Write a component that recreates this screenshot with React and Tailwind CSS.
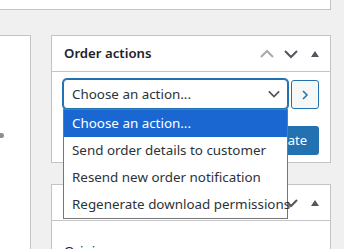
import React from 'react';

function Chevron({ dir = 'down', className = '' }) {
  const d = dir === 'up' ? 'M1 8 L7 2 L13 8' : 'M1 2 L7 8 L13 2';
  return (
    <svg width="14" height="10" viewBox="0 0 14 10" className={className}>
      <path d={d} fill="none" stroke="currentColor" strokeWidth="2" />
    </svg>
  );
}

function Triangle() {
  return (
    <svg width="8" height="6" viewBox="0 0 8 6" className="text-[#50575e]">
      <path d="M0 6 L4 0 L8 6 Z" fill="currentColor" />
    </svg>
  );
}

function PanelHeader({ title }) {
  return (
    <div className="flex items-center h-[36px] border-b border-[#c3c4c7] pl-[12px] pr-[8px]">
      <h2 className="flex-1 text-[13.2px] font-semibold text-[#1d2327]">{title}</h2>
      <div className="flex items-center gap-[10px] text-[#787c82]">
        <Chevron dir="up" className="text-[#a7aaad]" />
        <Chevron dir="down" className="text-[#50575e]" />
        <span className="w-[14px] flex justify-center">
          <Triangle />
        </span>
      </div>
    </div>
  );
}

const options = [
  'Choose an action...',
  'Send order details to customer',
  'Resend new order notification',
  'Regenerate download permissions',
];

export default function App() {
  return (
    <div
      className="w-[344px] h-[249px] overflow-hidden bg-[#f0f0f1] text-[13.4px] text-[#2c3338]"
      style={{ fontFamily: '"Noto Sans", "Open Sans", sans-serif' }}
    >
      <div className="w-[331px] h-[10px] bg-white border-b border-r border-[#c3c4c7]" />

      <div className="flex mt-[25px] gap-[20px]">
        <div className="relative w-[31px] h-[300px] bg-white border-r border-t border-[#c3c4c7]">
          <span className="absolute left-0 top-[97px] w-[4px] h-[5px] rounded-r-full bg-[#8c8f94]" />
        </div>

        <div className="w-[280px] flex flex-col gap-[21px]">
          <div className="relative bg-white border border-[#c3c4c7]">
            <PanelHeader title="Order actions" />
            <div className="pl-[11px] pr-[11px] pt-[7px] pb-[7px]">
              <div className="flex items-start gap-[3px]">
                <div className="w-[225px] h-[30px] flex items-center justify-between pl-[8px] pr-[7px] border border-[#2271b1] rounded-[4px] shadow-[0_0_0_1px_#2271b1] bg-white text-[#2c3338]">
                  <span>Choose an action...</span>
                  <Chevron dir="down" className="text-[#50575e] w-[12px]" />
                </div>
                <button className="mt-[1px] w-[28px] h-[29px] flex items-center justify-center border border-[#2271b1] rounded-[3px] bg-[#f6f7f7] text-[#2271b1]">
                  <svg width="8" height="10" viewBox="0 0 8 10">
                    <path d="M2 1 L6 5 L2 9" fill="none" stroke="currentColor" strokeWidth="1.5" />
                  </svg>
                </button>
              </div>
              <div className="flex justify-end mt-[17px]">
                <button className="h-[29px] px-[12px] rounded-[3px] bg-[#2271b1] text-white text-[13px]">
                  Update
                </button>
              </div>
            </div>

            <ul className="absolute z-10 left-[11px] top-[73px] w-[225px] bg-white border border-[#767676]">
              {options.map((o, i) => (
                <li
                  key={o}
                  className={
                    'h-[27px] flex items-center pl-[8px] whitespace-nowrap ' +
                    (i === 0 ? 'bg-[#1a67d2] text-white' : 'text-[#2c3338]')
                  }
                >
                  {o}
                </li>
              ))}
            </ul>
          </div>

          <div className="bg-white border border-[#c3c4c7] h-[120px]">
            <PanelHeader title="" />
            <div className="pl-[12px] pt-[20px] text-[#1d2327]">Origin</div>
          </div>
        </div>
      </div>
    </div>
  );
}
